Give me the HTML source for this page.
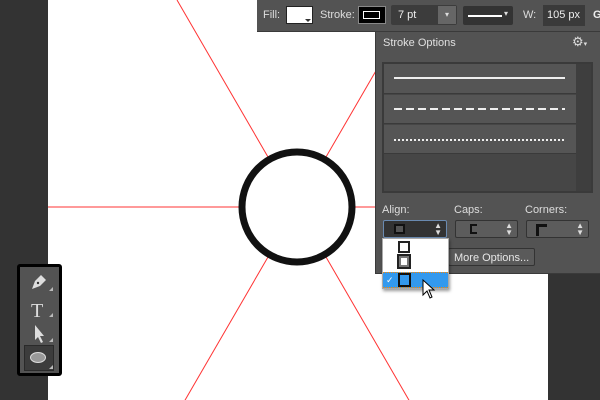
<!DOCTYPE html>
<html><head><style>
*{margin:0;padding:0;box-sizing:border-box}
body{width:600px;height:400px;overflow:hidden;background:#fff;position:relative;font-family:"Liberation Sans",sans-serif;font-size:11px;color:#ddd}
.a{position:absolute}
.tri{position:absolute;width:0;height:0;border-left:4px solid transparent;border-bottom:4px solid #bbb}
</style></head><body>
<div class="a" style="left:0;top:0;width:48px;height:400px;background:#333"></div>
<div class="a" style="left:548px;top:0;width:52px;height:400px;background:#333"></div>
<svg class="a" style="left:0;top:0" width="600" height="400">
<line x1="48" y1="207" x2="600" y2="207" stroke="#f33" stroke-width="1"/>
<line x1="177" y1="0" x2="417" y2="414" stroke="#f33" stroke-width="1"/>
<line x1="417" y1="0" x2="177" y2="414" stroke="#f33" stroke-width="1"/>
<circle cx="297" cy="207" r="55" fill="#fff" stroke="#111" stroke-width="7"/>
</svg>
<div class="a" style="left:257px;top:0;width:343px;height:32px;background:#535353;border-bottom:1px solid #3a3a3a"></div>
<div class="a" style="left:263px;top:9px;color:#ddd">Fill:</div>
<div class="a" style="left:286px;top:6px;width:27px;height:18px;background:#fff;border:1px solid #222"><div class="tri" style="right:1px;bottom:1px;border-left:3px solid transparent;border-right:3px solid transparent;border-bottom:none;border-top:3px solid #333"></div></div>
<div class="a" style="left:320px;top:9px">Stroke:</div>
<div class="a" style="left:358px;top:6px;width:28px;height:18px;background:#000;border:1px solid #888"><div style="margin:4px 4px;width:17px;height:8px;border:1px solid #fff"></div></div>
<div class="a" style="left:391px;top:5px;width:66px;height:20px;background:#3c3c3c;border-radius:2px"></div>
<div class="a" style="left:398px;top:9px;color:#eee">7 pt</div>
<div class="a" style="left:438px;top:6px;width:18px;height:18px;background:#666;color:#ddd;text-align:center;font-size:8px;line-height:18px">▾</div>
<div class="a" style="left:463px;top:6px;width:50px;height:19px;background:#333;border-radius:2px"><div style="position:absolute;left:5px;top:9px;width:34px;height:2px;background:#fff"></div><div style="position:absolute;left:41px;top:3px;font-size:8px">▾</div></div>
<div class="a" style="left:523px;top:9px">W:</div>
<div class="a" style="left:543px;top:5px;width:42px;height:21px;background:#3a3a3a"></div>
<div class="a" style="left:547px;top:9px;color:#eee">105 px</div>
<div class="a" style="left:593px;top:9px;color:#eee;font-weight:bold">G</div>
<div class="a" style="left:375px;top:32px;width:225px;height:242px;background:#535353;border-left:1px solid #3a3a3a;border-bottom:1px solid #3a3a3a"></div>
<div class="a" style="left:383px;top:37px;color:#e0e0e0">Stroke Options</div>
<div class="a" style="left:572px;top:34px;color:#ddd;font-size:13px">⚙<span style="font-size:7px">▾</span></div>
<div class="a" style="left:382px;top:62px;width:211px;height:131px;background:#464646;border:2px solid #3a3a3a"></div>
<div class="a" style="left:576px;top:64px;width:15px;height:127px;background:#3e3e3e"></div>
<div class="a" style="left:384px;top:64px;width:192px;height:30px;background:#555;border-bottom:1px solid #3a3a3a"><div style="position:absolute;left:10px;top:13px;width:171px;height:2px;background:#eee"></div></div>
<div class="a" style="left:384px;top:95px;width:192px;height:29px;background:#555;border-bottom:1px solid #3a3a3a"><div style="position:absolute;left:10px;top:13px;width:171px;height:2px;background:repeating-linear-gradient(90deg,#eee 0 8px,transparent 8px 12px)"></div></div>
<div class="a" style="left:384px;top:125px;width:192px;height:29px;background:#555;border-bottom:1px solid #3a3a3a"><div style="position:absolute;left:10px;top:14px;width:171px;height:2px;background:repeating-linear-gradient(90deg,#eee 0 2px,transparent 2px 4px)"></div></div>
<div class="a" style="left:382px;top:204px;color:#ddd">Align:</div>
<div class="a" style="left:454px;top:204px;color:#ddd">Caps:</div>
<div class="a" style="left:525px;top:204px;color:#ddd">Corners:</div>
<div class="a" style="left:383px;top:220px;width:64px;height:18px;background:#333;border:1px solid #6a8ab0;border-radius:2px"><div style="position:absolute;left:10px;top:3px;width:11px;height:10px;border:2px solid #111;background:#555"></div><div style="position:absolute;right:4px;top:1px;font-size:8px;line-height:7px">▲<br>▼</div></div>
<div class="a" style="left:455px;top:220px;width:63px;height:18px;background:#5c5c5c;border:1px solid #333;border-radius:2px"><div style="position:absolute;left:14px;top:3px;width:7px;height:10px;border:2px solid #111;border-right:none"></div><div style="position:absolute;right:4px;top:1px;font-size:8px;line-height:7px">▲<br>▼</div></div>
<div class="a" style="left:526px;top:220px;width:63px;height:18px;background:#5c5c5c;border:1px solid #333;border-radius:2px"><div style="position:absolute;left:9px;top:3px;width:11px;height:12px;border-left:3px solid #111;border-top:3px solid #111"></div><div style="position:absolute;right:4px;top:1px;font-size:8px;line-height:7px">▲<br>▼</div></div>
<div class="a" style="left:448px;top:248px;width:87px;height:18px;background:#5a5a5a;border:1px solid #333;border-radius:2px;color:#e6e6e6;padding:3px 0 0 5px">More Options...</div>
<div class="a" style="left:382px;top:238px;width:67px;height:51px;background:#fff;border:1px solid #aaa;box-shadow:1px 2px 3px rgba(0,0,0,.4)"></div>
<div class="a" style="left:398px;top:241px;width:12px;height:12px;border:2px solid #222;background:#fff"></div>
<div class="a" style="left:397px;top:254px;width:14px;height:15px;border:2px solid #222;background:#777"><div style="margin:2px;width:6px;height:7px;background:#fff"></div></div>
<div class="a" style="left:383px;top:272px;width:65px;height:16px;background:#3399ee;border-top:1px dotted #f80;border-bottom:1px dotted #f80"></div>
<div class="a" style="left:386px;top:275px;color:#fff;font-size:9px">✓</div>
<div class="a" style="left:398px;top:273px;width:13px;height:14px;border:2px solid #111"></div>
<svg class="a" style="left:421px;top:279px" width="16" height="22"><path d="M2 1 L2 16 L6 12 L9 19 L11 18 L8 11 L13 11 Z" fill="#fff" stroke="#000" stroke-width="1"/></svg>
<div class="a" style="left:17px;top:264px;width:45px;height:112px;background:#535353;border:3px solid #000;border-radius:3px"></div>
<svg class="a" style="left:28px;top:272px" width="26" height="92">
<path d="M4 17 L7 9 L13 3 L18 8 L12 14 Z" fill="#ddd"/><circle cx="10" cy="11" r="1.2" fill="#333"/>
<text x="3" y="45" font-family="Liberation Serif" font-size="20" fill="#ddd">T</text>
<path d="M7 53 L7 68 L10 65 L13 71 L15 70 L12 64 L16 64 Z" fill="#ddd"/>
</svg>
<div class="tri" style="left:49px;top:287px"></div>
<div class="tri" style="left:49px;top:313px"></div>
<div class="tri" style="left:49px;top:338px"></div>
<div class="a" style="left:24px;top:345px;width:30px;height:26px;background:#3c3c3c;border:1px solid #2a2a2a"></div>
<div class="a" style="left:30px;top:352px;width:16px;height:11px;border-radius:50%;background:#999;border:1px solid #ddd"></div>
<div class="tri" style="left:49px;top:365px"></div>
</body></html>
